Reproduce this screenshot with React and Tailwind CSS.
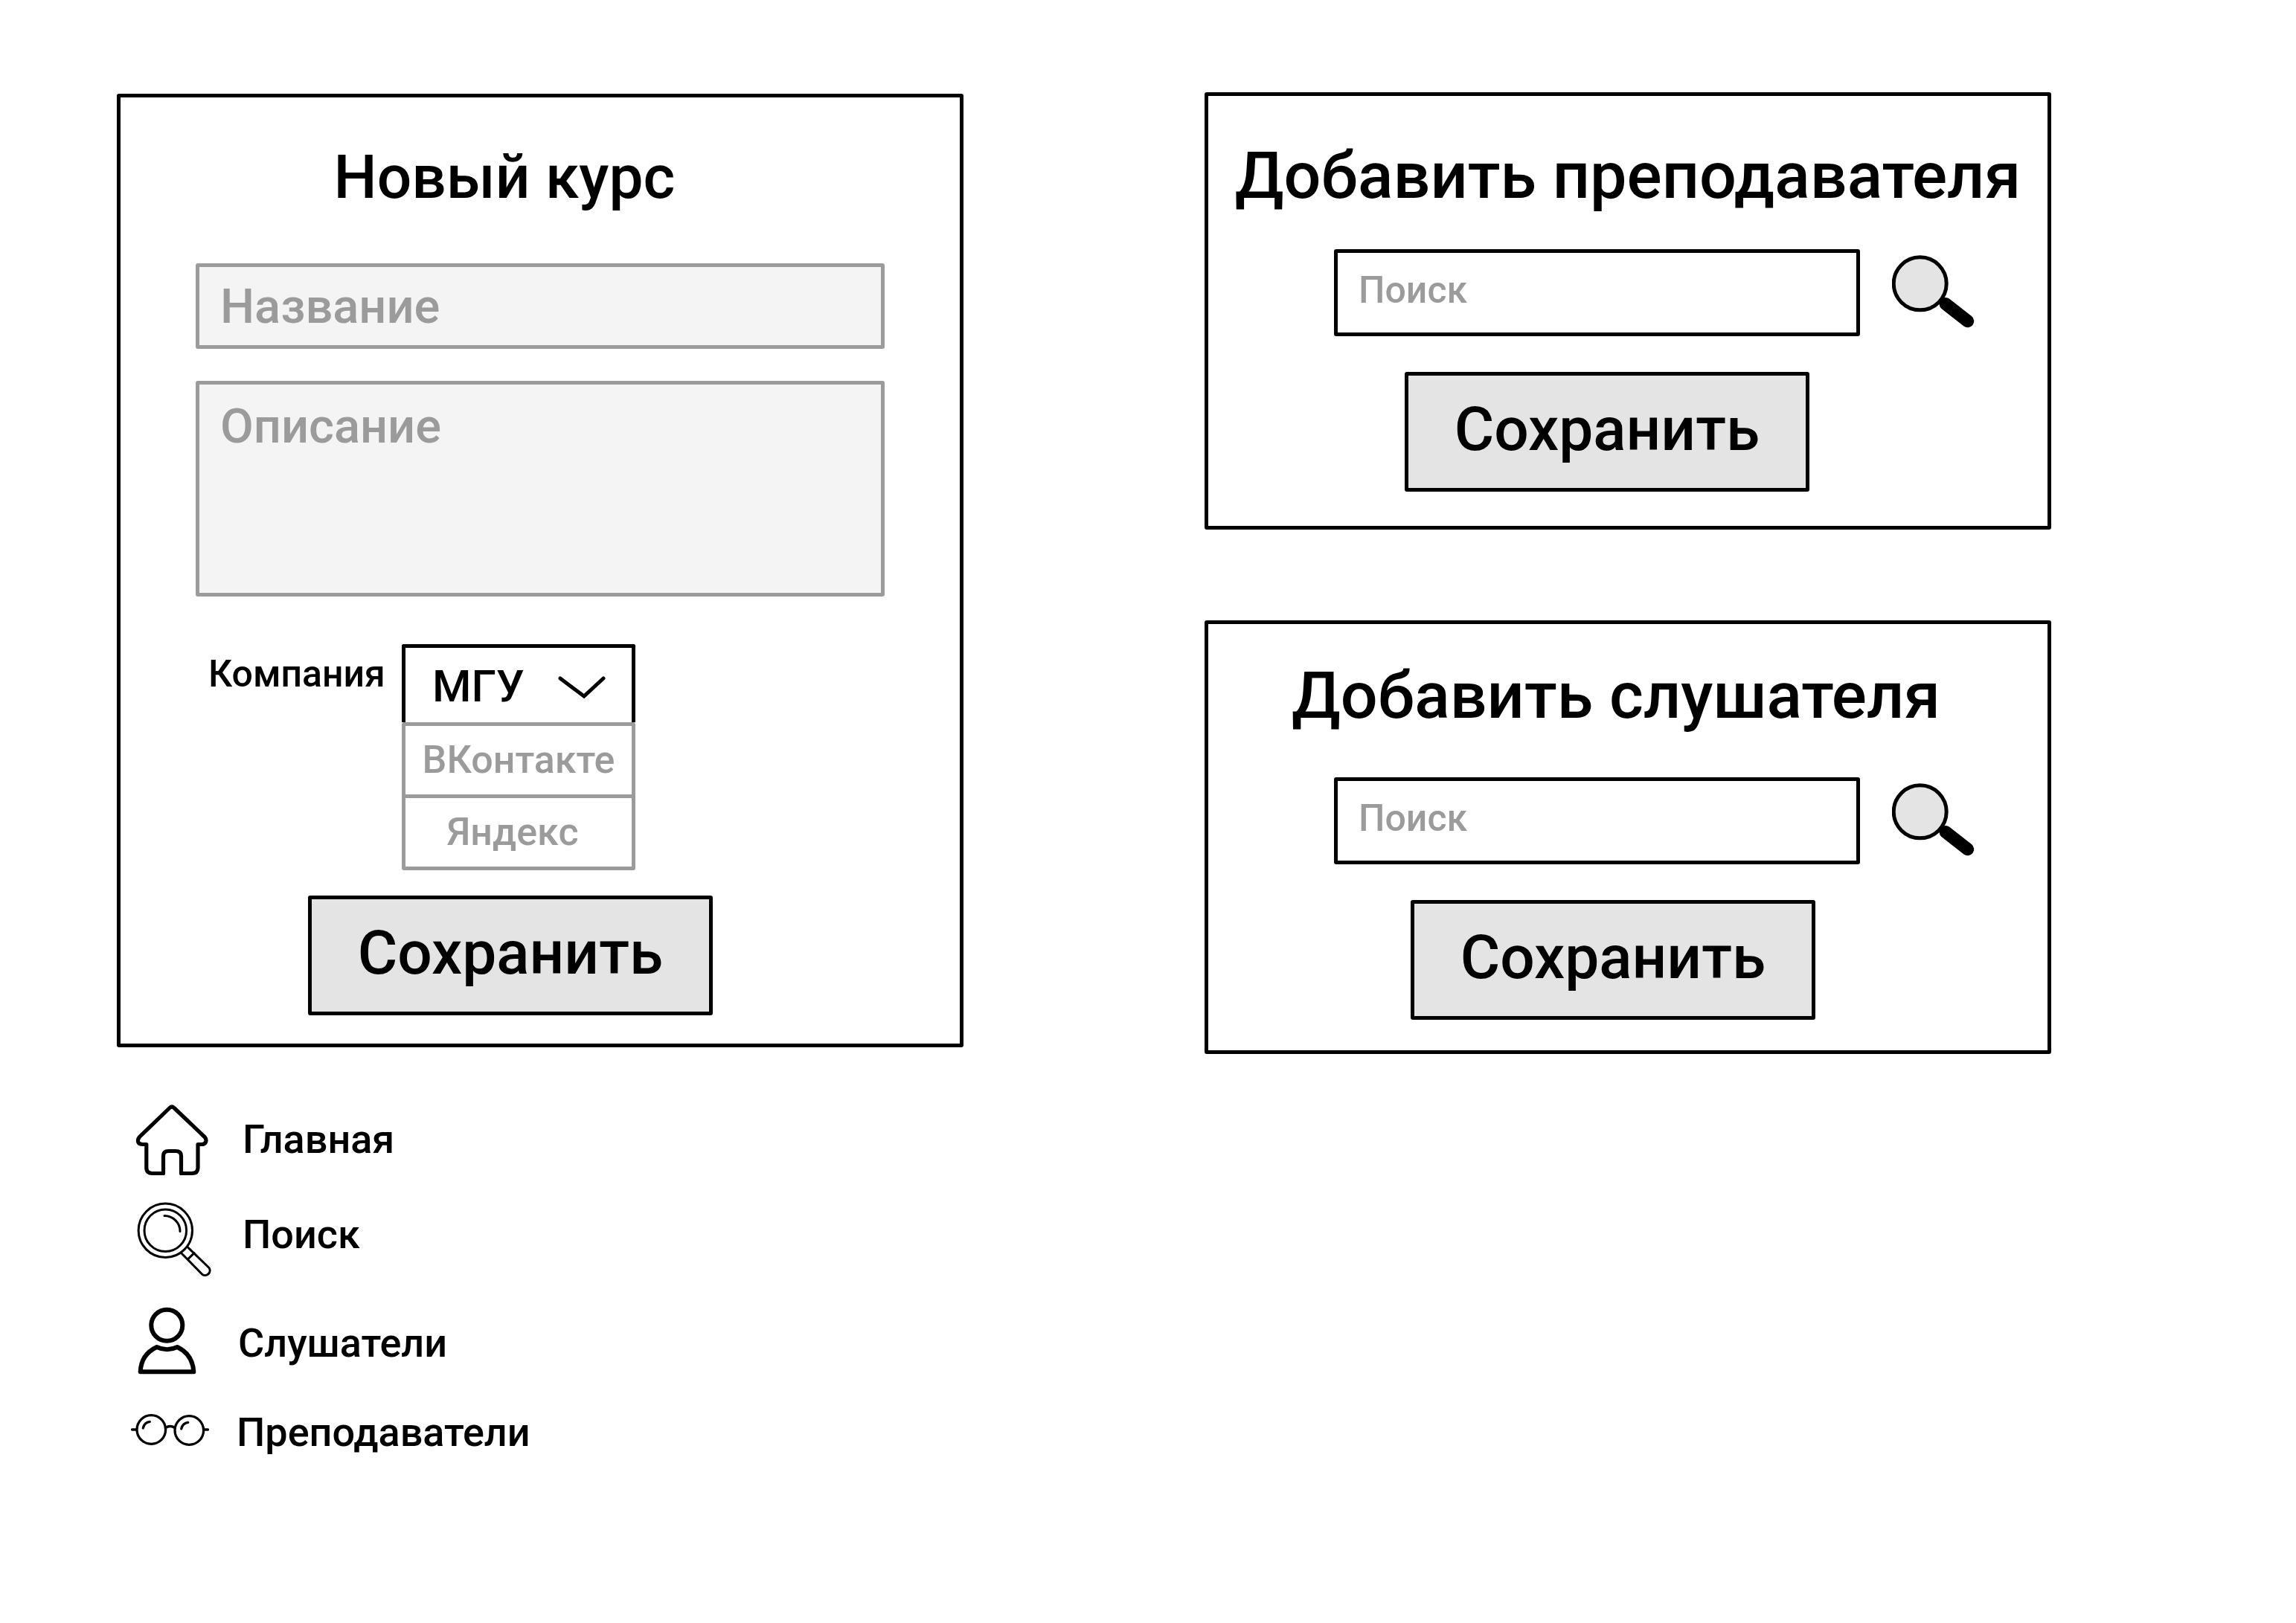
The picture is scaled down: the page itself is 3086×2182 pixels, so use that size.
import React from "react";

function SaveButton() {
  return (
    <button
      type="submit"
      className="h-[161px] w-[544px] rounded-[3px] border-5 border-black bg-[#e4e4e4] pb-2 text-[82px] leading-[96px] font-medium"
    >
      Сохранить
    </button>
  );
}

function SearchIcon() {
  return (
    <svg viewBox="0 0 112 98" className="h-[98px] w-[112px]" aria-hidden="true">
      <path d="M72 65.500 L101.700 88.700" stroke="#000" strokeWidth="17" strokeLinecap="round" />
      <circle cx="37.700" cy="38.300" r="35.500" fill="#e4e4e4" stroke="#000" strokeWidth="5" />
    </svg>
  );
}

function HomeIcon() {
  return (
    <path
      d="M52 7.500 Q55 4.500 58 7.500 L99 46.500 Q102 50 100.500 53.500 Q99 56.500 95 56.500 H90 V88 Q90 95.500 82 95.500 H67.500 V72 Q67.500 65.500 60 65.500 H50.500 Q43.500 65.500 43.500 72 V95.500 H28.500 Q20.800 95.500 20.800 88 V56.500 H16 Q11 56.500 9.800 53.500 Q8.500 50 11.500 46.500 Z"
      strokeWidth="5.200"
    />
  );
}

function LensIcon() {
  return (
    <g strokeWidth="3">
      <circle cx="46.300" cy="42.300" r="36.200" />
      <circle cx="46.300" cy="42.300" r="28.300" />
      <path d="M45 22.500 A21 21 0 0 1 66 43.500" />
      <path d="M75.500 64 L105 92.500 A6.500 6.500 0 0 1 96 101.500 L67.500 72.500" />
      <path d="M85 72.700 L76.700 80.700" />
    </g>
  );
}

function PersonIcon() {
  return (
    <g strokeWidth="6">
      <circle cx="48.300" cy="29.700" r="21" />
      <path d="M12.700 92.300 Q13.500 69 34.700 59 Q48.500 65.500 62.300 59 Q83 69 84.300 92.300 Z" />
    </g>
  );
}

function GlassesIcon() {
  return (
    <g strokeWidth="3.300">
      <circle cx="27.300" cy="50" r="19.300" />
      <circle cx="78.300" cy="51" r="19.300" />
      <path d="M1.500 50 H7.500 M98 50 H103.500 M46.500 47.500 Q52.700 43.500 59 47.500" />
      <path d="M16.300 48 Q18 40 25.300 39.300 M67.700 49 Q69.400 41 76.700 40.300" />
    </g>
  );
}

const navItems = [
  { label: "Главная", Icon: HomeIcon, row: "gap-[38px]", text: "" },
  { label: "Поиск", Icon: LensIcon, row: "mt-[30px] gap-[38px]", text: "pb-1" },
  { label: "Слушатели", Icon: PersonIcon, row: "mt-10 gap-8", text: "pt-2" },
  { label: "Преподаватели", Icon: GlassesIcon, row: "mt-5 gap-[30px]", text: "pt-2" },
];

function CourseForm() {
  return (
    <form className="flex flex-col rounded-[3px] border-5 border-black px-[101px] pt-[59px] pb-[38px]">
      <h2 className="pr-24 text-center text-[82px] leading-[96px] font-medium">Новый курс</h2>
      <input
        type="text"
        aria-label="Название"
        placeholder="Название"
        className="mt-[68px] h-[115px] w-full rounded-[3px] border-5 border-[#9b9b9b] bg-[#f4f4f4] px-7 text-[65px] font-medium placeholder:text-[#9b9b9b]"
      />
      <textarea
        aria-label="Описание"
        placeholder="Описание"
        className="mt-[43px] h-[290px] w-full resize-none rounded-[3px] border-5 border-[#9b9b9b] bg-[#f4f4f4] px-7 pt-4 text-[65px] leading-[80px] font-medium placeholder:text-[#9b9b9b]"
      />
      <div className="mt-16 flex items-start pl-[17px]">
        <label htmlFor="company" className="w-[260px] pt-2 text-[50px] leading-[64px] font-medium">
          Компания
        </label>
        <div className="w-[314px]">
          <div className="relative">
            <select
              id="company"
              className="block h-[105px] w-full appearance-none rounded-t-[3px] border-5 border-b-0 border-black bg-white pt-1 pl-9 text-[60px] font-medium"
            >
              <option>МГУ</option>
              <option>ВКонтакте</option>
              <option>Яндекс</option>
            </select>
            <svg
              viewBox="0 0 64 32"
              className="pointer-events-none absolute top-[42px] right-[40px] h-8 w-16"
              fill="none"
              stroke="#000"
              strokeWidth="5"
              strokeLinecap="round"
              aria-hidden="true"
            >
              <path d="M3 4 L35 28 L61 4" />
            </svg>
          </div>
          <ul className="rounded-[3px] border-5 border-[#9b9b9b] text-[#9b9b9b]">
            <li className="border-b-5 border-[#9b9b9b]">
              <button type="button" className="h-[92px] w-full text-[52px] leading-[64px] font-medium">
                ВКонтакте
              </button>
            </li>
            <li>
              <button type="button" className="h-[92px] w-full pr-4 text-[52px] leading-[64px] font-medium">
                Яндекс
              </button>
            </li>
          </ul>
        </div>
      </div>
      <div className="mt-[34px] flex justify-center pr-20">
        <SaveButton />
      </div>
    </form>
  );
}

function AddPersonForm({ title, className, titleClass, saveClass }) {
  return (
    <form className={`flex flex-col rounded-[3px] border-5 border-black ${className}`}>
      <h2 className={`text-center text-[88px] leading-[96px] font-medium whitespace-nowrap ${titleClass}`}>{title}</h2>
      <div className="flex items-center gap-[43px] pr-[97px] pl-[169px]">
        <input
          type="search"
          aria-label={title}
          placeholder="Поиск"
          className="h-[117px] min-w-0 flex-1 rounded-[3px] border-5 border-black bg-white px-7 pb-2 text-[50px] font-medium placeholder:text-[#9b9b9b]"
        />
        <button type="button" aria-label="Найти" className="pb-1">
          <SearchIcon />
        </button>
      </div>
      <div className={`flex justify-center ${saveClass}`}>
        <SaveButton />
      </div>
    </form>
  );
}

export default function App() {
  return (
    <main className="grid min-h-screen grid-cols-2 items-start gap-x-[324px] bg-white pt-[124px] pr-[329px] pb-20 pl-[157px] font-['Roboto',sans-serif] text-black">
      <div className="pt-0.5">
        <CourseForm />
        <nav className="mt-[74px] pl-[19px]">
          <ul>
            {navItems.map(({ label, Icon, row, text }) => (
              <li key={label}>
                <a href="#" className={`flex h-[100px] items-center text-[54px] leading-[64px] font-medium ${row}`}>
                  <svg
                    viewBox="0 0 112 100"
                    className="h-[100px] w-[112px] overflow-visible"
                    fill="none"
                    stroke="#000"
                    strokeLinejoin="round"
                    strokeLinecap="round"
                    aria-hidden="true"
                  >
                    <Icon />
                  </svg>
                  <span className={text}>{label}</span>
                </a>
              </li>
            ))}
          </ul>
        </nav>
      </div>
      <div className="flex flex-col gap-[122px]">
        <AddPersonForm
          title="Добавить преподавателя"
          className="pt-[59px] pb-[46px]"
          titleClass="mb-[51px]"
          saveClass="mt-12 pr-14"
        />
        <AddPersonForm
          title="Добавить слушателя"
          className="pt-12 pb-[41px]"
          titleClass="mb-[62px] pr-8"
          saveClass="mt-12 pr-10"
        />
      </div>
    </main>
  );
}
